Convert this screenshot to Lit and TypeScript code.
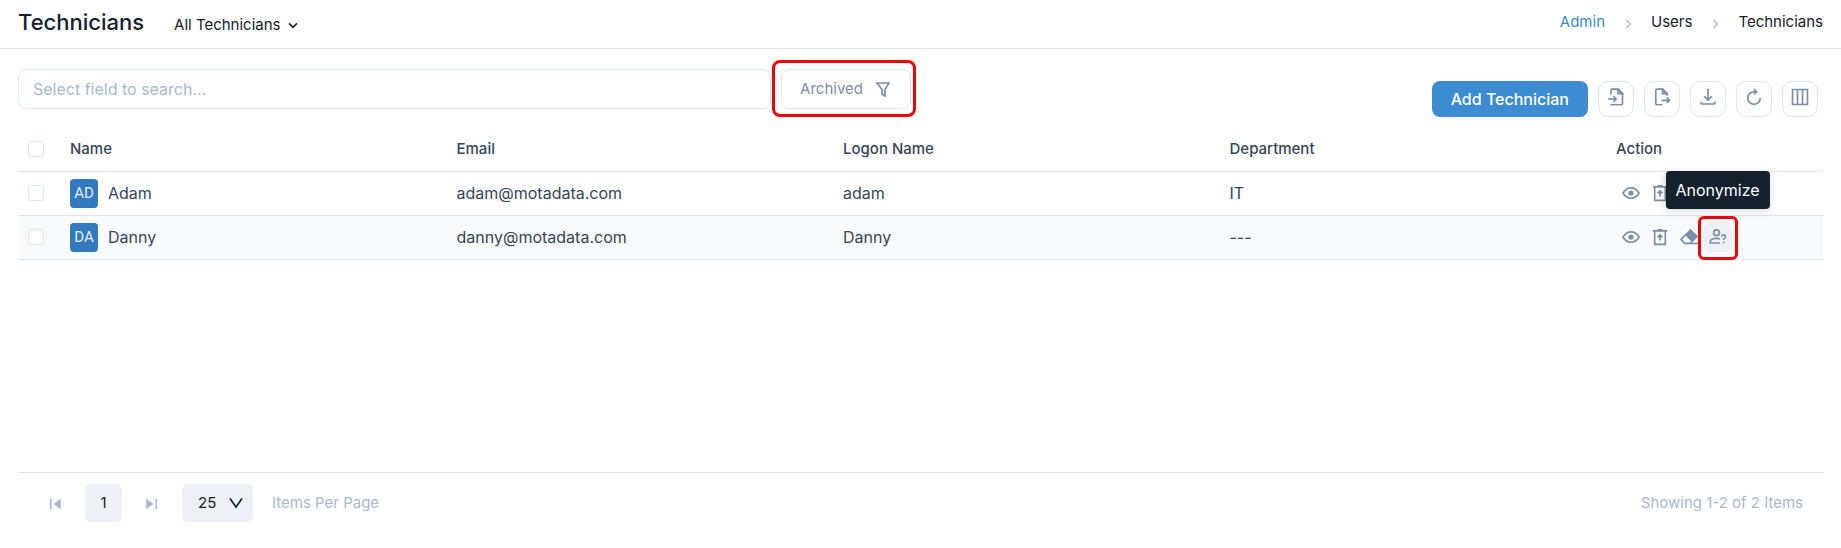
import { LitElement, html, svg, css, nothing } from "lit";
import { customElement, state } from "lit/decorators.js";

interface Technician {
  initials: string;
  name: string;
  email: string;
  logon: string;
  department: string;
}

const TECHNICIANS: Technician[] = [
  { initials: "AD", name: "Adam", email: "adam@motadata.com", logon: "adam", department: "IT" },
  { initials: "DA", name: "Danny", email: "danny@motadata.com", logon: "Danny", department: "---" },
];

const icons = {
  import: svg`<path d="M4 6.500V2.300c0-.7.500-1.200 1.200-1.200H11l4.500 4.500v9.900c0 .7-.5 1.200-1.200 1.200H3.500"/><path d="M11 1.100v4.500h4.500z" fill="currentColor" fill-opacity=".35"/><path d="M1 11h8M6.500 8.300 9.200 11l-2.700 2.700"/>`,
  export: svg`<path d="M9.500 16.700H4c-.7 0-1.200-.5-1.200-1.200V2.300c0-.7.500-1.200 1.200-1.200h5.500L14 5.600v2.200"/><path d="M9.500 1.100v4.500H14z" fill="currentColor" fill-opacity=".35"/><path d="M8.500 12.300h8M13.800 9.600l2.700 2.700-2.700 2.700"/>`,
  download: svg`<path d="M9 1v11M5.300 8.300 9 12l3.700-3.700M2.200 13.500V15.300c0 .4.300.7.700.7h12.200c.4 0 .7-.3.700-.7v-1.800"/>`,
  refresh: svg`<path d="M11 3.700H9a6.300 6.300 0 1 0 6.300 6.300"/><path d="M8.900 1 11.600 3.700 8.900 6.400"/>`,
  columns: svg`<path d="M1.500 1.500h15v15h-15zM6.500 1.500v15M11.500 1.500v15"/>`,
  view: svg`<path d="M1 9c1.900-3.300 4.700-5.200 8-5.200s6.100 1.900 8 5.200c-1.900 3.300-4.700 5.200-8 5.200s-6.100-1.900-8-5.200z"/><circle cx="9" cy="9" r="2.600" fill="currentColor" stroke="none"/>`,
  restore: svg`<path d="M2 2.800h14M6.500 1.800h5M3.700 3v13.300h10.600V3"/><path d="M9 12.500V7M6.500 9.300 9 6.800l2.500 2.500"/>`,
  erase: svg`<path d="M10.500 2 17 8.500l-4.700 4.700L5.800 6.700z" fill="currentColor"/><path d="M5.800 6.700 1 11.500l3.800 3.800h5.400l2.100-2.100M9 15.500h9"/>`,
  anonymize: svg`<circle cx="7.500" cy="4.800" r="2.900"/><path d="M11 10.900c-1-.4-2.200-.6-3.500-.6-3.500 0-6.300 1.500-6.300 3.500v1.200H11"/><path d="M12.700 8.600c.1-1 .9-1.700 1.900-1.700s1.900.7 1.900 1.700c0 1.500-1.900 1.500-1.900 3.300M14.600 13.700v1.500"/>`,
};

const icon = (shape: unknown) => html`
  <svg class="icon" viewBox="0 0 18 18" aria-hidden="true">${shape}</svg>
`;

@customElement("app-root")
export class AppRoot extends LitElement {
  @state() private selected = new Set<string>();

  static styles = css`
    :host {
      display: flex;
      flex-direction: column;
      min-height: 100vh;
      background: #fff;
      color: #364658;
      font-family: "Inter", sans-serif;
      font-size: 15px;
      line-height: 20px;
    }
    * { box-sizing: border-box; }
    button, input, select { font: inherit; color: inherit; margin: 0; }
    button { border: 0; padding: 0; background: none; cursor: pointer; }
    a { color: inherit; text-decoration: none; }
    .icon {
      display: block;
      width: 18px;
      height: 18px;
      fill: none;
      stroke: currentColor;
      stroke-width: 1.65;
    }

    .header {
      display: flex;
      align-items: center;
      padding: 0 18px;
      height: 49px;
      border-bottom: 1px solid #dee5ed;
      color: #14212d;
    }
    .title { margin: 0 30px 4px 0; font-size: 22px; line-height: 28px; font-weight: 500; }
    .views { display: flex; align-items: center; gap: 6px; padding-top: 2px; }
    .chevron { width: 12px; height: 12px; }
    .crumbs {
      display: flex;
      align-items: center;
      gap: 18px;
      margin: 0 0 4px auto;
      padding: 0;
      list-style: none;
    }
    .crumbs li { display: flex; align-items: center; gap: 18px; }
    .crumbs .icon { width: 10px; height: 10px; margin-top: 4px; color: #a5bad0; }
    .link { color: #3d8bd0; }

    .toolbar { display: flex; align-items: flex-start; padding: 20px 23px 0 18px; }
    .filters { display: flex; gap: 10px; width: 50%; padding-right: 7px; }
    .search {
      flex: 1;
      min-width: 0;
      height: 40px;
      padding: 0 14px;
      border: 1px solid #dee5ed;
      border-radius: 8px;
      background: #fff;
      font-size: 16px;
    }
    .search::placeholder { color: #a5bad0; opacity: 1; }
    .marked { position: relative; }
    .marked::after {
      content: "";
      position: absolute;
      inset: -9px -5px -8px -9px;
      border: 3px solid #ea0606;
      border-radius: 8px;
      pointer-events: none;
    }
    .archived {
      display: flex;
      align-items: center;
      gap: 12px;
      height: 40px;
      padding: 0 19px 0 18px;
      border: 1px solid #dee5ed;
      border-radius: 8px;
      color: #7b8fa5;
    }
    .archived .icon { width: 16px; height: 16px; }
    .actions { display: flex; gap: 10px; margin: 12px 0 0 auto; }
    .primary {
      height: 36px;
      padding: 0 19px;
      border-radius: 8px;
      background: #3d8bd0;
      color: #fff;
      font-size: 16px;
      font-weight: 500;
    }
    .tool {
      display: grid;
      justify-items: center;
      width: 36px;
      height: 36px;
      padding-top: 6px;
      align-items: start;
      border: 1px solid #dee5ed;
      border-radius: 10px;
      color: #7b8fa5;
    }

    .content { flex: 1; padding: 10px 18px 0; }
    .grid { width: 100%; table-layout: fixed; border-collapse: collapse; }
    .grid th, .grid td {
      height: 44px;
      padding: 0;
      border-bottom: 1px solid #dee5ed;
      text-align: left;
      vertical-align: middle;
    }
    .grid th { font-weight: 500; }
    .grid td { font-size: 16px; }
    .pick { width: 52px; }
    .act { width: 207px; }
    .striped { background: #f8fafc; }
    .check {
      appearance: none;
      display: block;
      width: 16px;
      height: 16px;
      margin-left: 10px;
      border: 1px solid #dee5ed;
      border-radius: 3px;
      background: #fff;
    }
    .check:checked { background: #3d8bd0; border-color: #3d8bd0; }
    .person { display: flex; align-items: center; gap: 10px; }
    .avatar {
      width: 28px;
      height: 29px;
      border-radius: 4px;
      background: #3279be;
      color: #e4eef8;
      font: 15px/29px "Liberation Sans Narrow", "Roboto", sans-serif;
      text-align: center;
    }
    .row-actions { display: flex; color: #7b8fa5; }
    .row-action { display: grid; place-items: center; width: 29px; height: 29px; border-radius: 8px; }
    .hovered { background: #edf1f6; }
    .hint { position: relative; }
    .hint::after {
      content: "";
      position: absolute;
      inset: -7px -6px -8px -5px;
      border: 3px solid #ea0606;
      border-radius: 6px;
      pointer-events: none;
    }
    .tooltip {
      position: absolute;
      bottom: calc(100% + 14px);
      left: 50%;
      transform: translateX(-50%);
      padding: 9px 10px;
      border-radius: 4px;
      background: #14212d;
      color: #fff;
      white-space: nowrap;
      box-shadow: 0 2px 8px rgba(0, 0, 0, 0.15);
    }

    .pager {
      display: flex;
      align-items: center;
      margin: 0 18px;
      padding: 11px 20px 26px 31px;
      border-top: 1px solid #dee5ed;
      color: #a5bad0;
    }
    .step { padding-top: 2px; }
    .step .icon { width: 12px; height: 12px; fill: currentColor; stroke: none; }
    .page {
      width: 37px;
      height: 38px;
      margin: 0 24px;
      border-radius: 6px;
      background: #edf1f6;
      color: #14212d;
    }
    .size { display: grid; align-items: center; margin: 0 19px 0 24px; color: #14212d; }
    .size select {
      grid-area: 1 / 1;
      appearance: none;
      width: 71px;
      height: 38px;
      padding: 0 16px;
      border: 0;
      border-radius: 6px;
      background: #edf1f6;
    }
    .size .icon { grid-area: 1 / 1; justify-self: end; width: 14px; height: 14px; margin-right: 10px; pointer-events: none; }
    .summary { margin-left: auto; }
  `;

  private toggle(name: string) {
    const next = new Set(this.selected);
    next.has(name) ? next.delete(name) : next.add(name);
    this.selected = next;
  }

  private toggleAll() {
    const all = this.selected.size === TECHNICIANS.length;
    this.selected = new Set(all ? [] : TECHNICIANS.map((t) => t.name));
  }

  private separator() {
    return icon(svg`<path d="M6 2l7 7-7 7" stroke-width="2.500"/>`);
  }

  private rowTemplate(t: Technician, active: boolean) {
    return html`
      <tr class=${active ? "striped" : ""}>
        <td>
          <input class="check" type="checkbox" aria-label="Select ${t.name}"
            .checked=${this.selected.has(t.name)} @change=${() => this.toggle(t.name)} />
        </td>
        <td><div class="person"><span class="avatar">${t.initials}</span><span>${t.name}</span></div></td>
        <td>${t.email}</td>
        <td>${t.logon}</td>
        <td>${t.department}</td>
        <td>
          <div class="row-actions">
            <button class="row-action" aria-label="View">${icon(icons.view)}</button>
            <button class="row-action" aria-label="Restore">${icon(icons.restore)}</button>
            ${active
              ? html`
                  <button class="row-action" aria-label="Erase">${icon(icons.erase)}</button>
                  <span class="hint">
                    <button class="row-action hovered" aria-labelledby="tip">${icon(icons.anonymize)}</button>
                    <span class="tooltip" id="tip" role="tooltip">Anonymize</span>
                  </span>
                `
              : nothing}
          </div>
        </td>
      </tr>
    `;
  }

  render() {
    return html`
      <header class="header">
        <h1 class="title">Technicians</h1>
        <button class="views">
          All Technicians
          <svg class="icon chevron" viewBox="0 0 12 12" aria-hidden="true"><path d="M2 4.300 6 8.300l4-4"/></svg>
        </button>
        <ol class="crumbs">
          <li><a class="link" href="#admin">Admin</a>${this.separator()}</li>
          <li><a href="#users">Users</a>${this.separator()}</li>
          <li>Technicians</li>
        </ol>
      </header>

      <div class="toolbar">
        <div class="filters">
          <input class="search" type="text" aria-label="Search" placeholder="Select field to search..." />
          <div class="marked">
            <button class="archived">
              Archived
              <svg class="icon" viewBox="0 0 16 16" aria-hidden="true"><path d="M2 2h12l-4 6.500V15l-3-2V8.500z"/></svg>
            </button>
          </div>
        </div>
        <div class="actions">
          <button class="primary">Add Technician</button>
          <button class="tool" aria-label="Import">${icon(icons.import)}</button>
          <button class="tool" aria-label="Export">${icon(icons.export)}</button>
          <button class="tool" aria-label="Download">${icon(icons.download)}</button>
          <button class="tool" aria-label="Refresh">${icon(icons.refresh)}</button>
          <button class="tool" aria-label="Columns">${icon(icons.columns)}</button>
        </div>
      </div>

      <main class="content">
        <table class="grid">
          <thead>
            <tr>
              <th class="pick">
                <input class="check" type="checkbox" aria-label="Select all"
                  .checked=${this.selected.size === TECHNICIANS.length} @change=${this.toggleAll} />
              </th>
              <th>Name</th>
              <th>Email</th>
              <th>Logon Name</th>
              <th>Department</th>
              <th class="act">Action</th>
            </tr>
          </thead>
          <tbody>
            ${TECHNICIANS.map((t, i) => this.rowTemplate(t, i === 1))}
          </tbody>
        </table>
      </main>

      <footer class="pager">
        <button class="step" aria-label="First page">
          <svg class="icon" viewBox="0 0 12 12" aria-hidden="true"><path d="M1 .5h1.500v11H1zM11.800.8v10.400L4.500 6z"/></svg>
        </button>
        <button class="page">1</button>
        <button class="step" aria-label="Last page">
          <svg class="icon" viewBox="0 0 12 12" aria-hidden="true"><path d="M.2.8v10.400L7.500 6zM9.500.5H11v11H9.500z"/></svg>
        </button>
        <span class="size">
          <select id="page-size">
            <option>25</option>
            <option>50</option>
            <option>100</option>
          </select>
          <svg class="icon" viewBox="0 0 14 14" aria-hidden="true"><path d="M1 2.500 7 11l6-8.500"/></svg>
        </span>
        <label for="page-size">Items Per Page</label>
        <span class="summary">Showing 1-2 of 2 Items</span>
      </footer>
    `;
  }
}
